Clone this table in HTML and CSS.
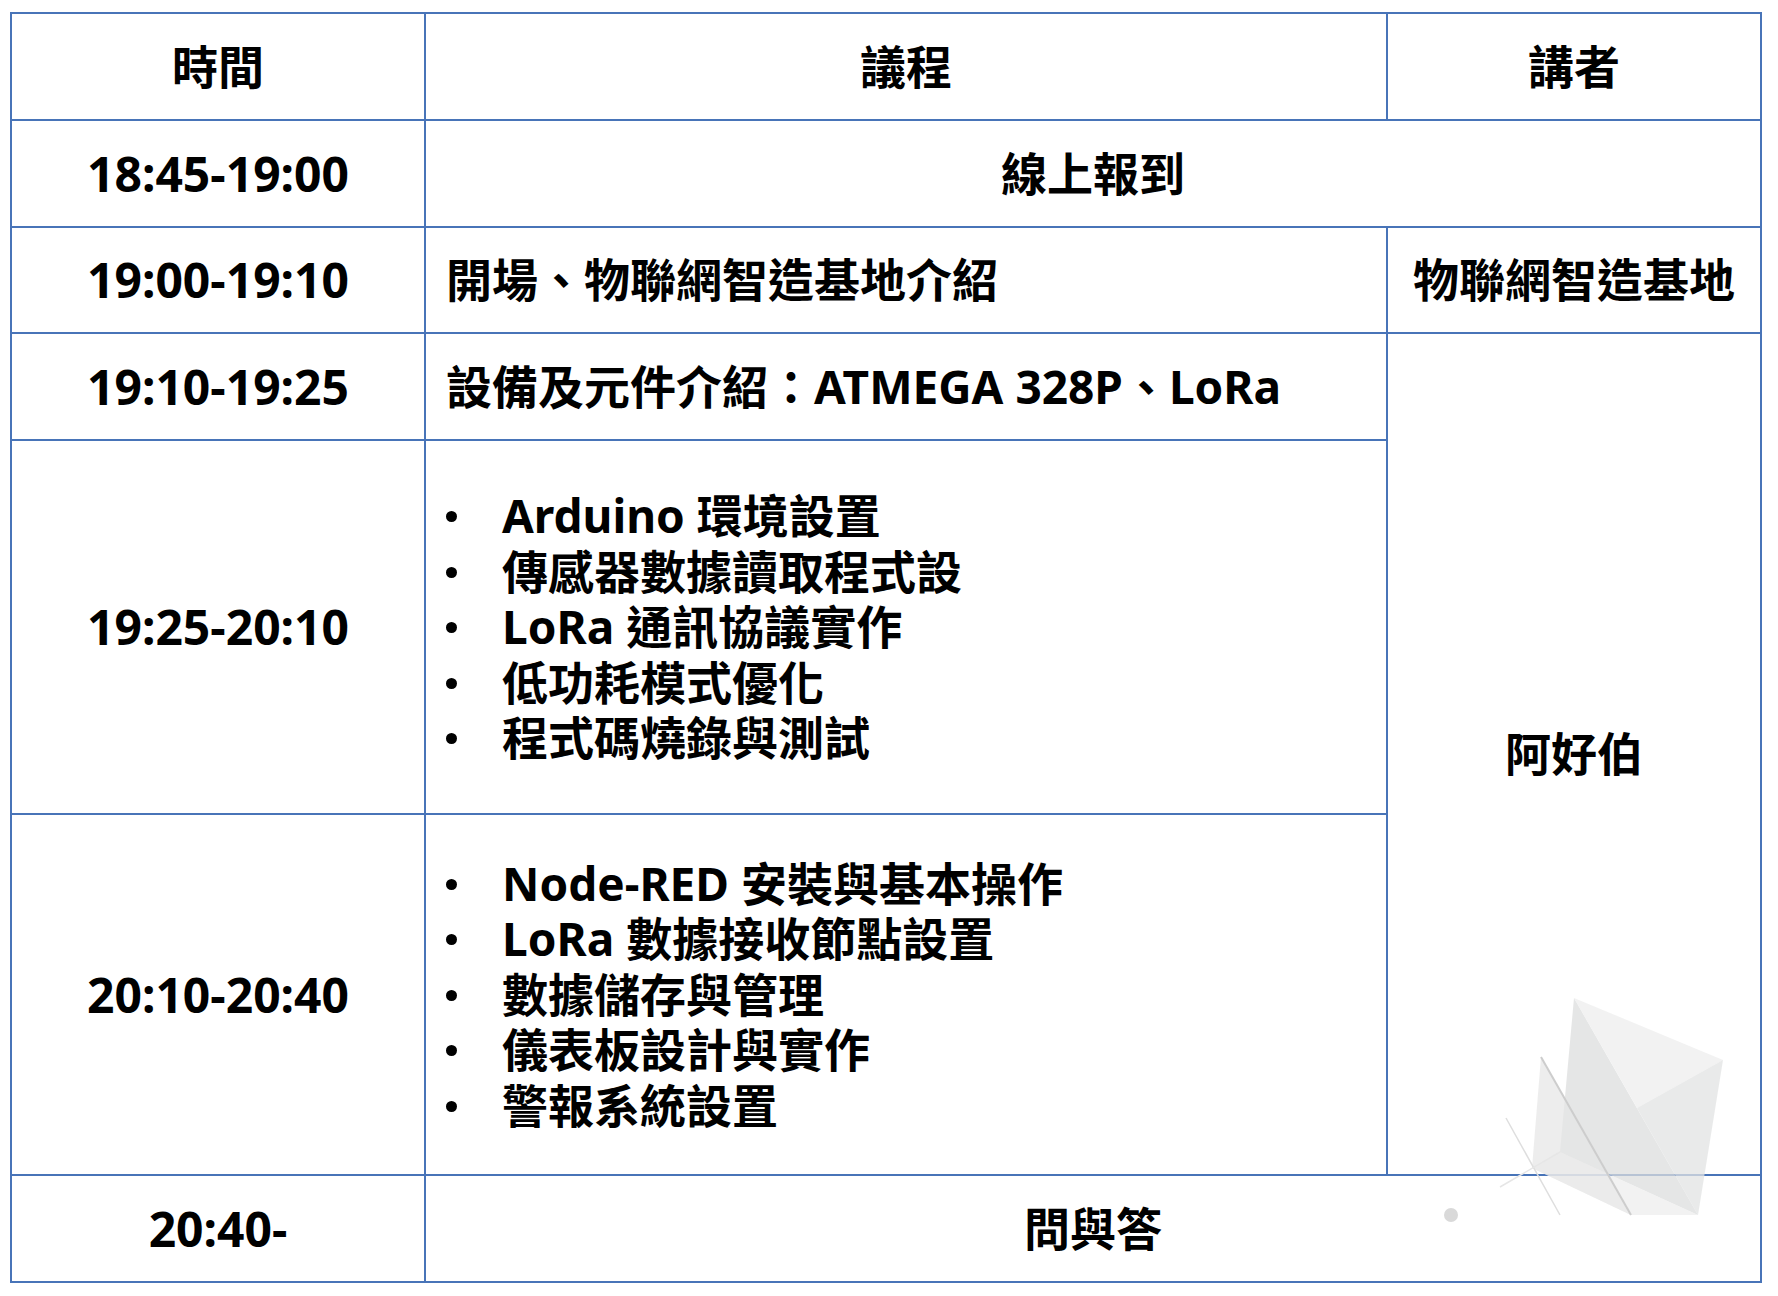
FILE: index.html
```html
<!DOCTYPE html>
<html lang="zh-Hant">
<head>
<meta charset="utf-8">
<title>議程</title>
<link rel="stylesheet" href="styles.css">
</head>
<body>
<div class="page">
  <div class="agenda">
    <div class="cell head">時間</div>
    <div class="cell head">議程</div>
    <div class="cell head">講者</div>

    <div class="cell time">18:45-19:00</div>
    <div class="cell center span2">線上報到</div>

    <div class="cell time">19:00-19:10</div>
    <div class="cell left">開場、物聯網智造基地介紹</div>
    <div class="cell center">物聯網智造基地</div>

    <div class="cell time">19:10-19:25</div>
    <div class="cell left">設備及元件介紹：ATMEGA 328P、LoRa</div>
    <div class="cell center speaker">阿好伯</div>

    <div class="cell time">19:25-20:10</div>
    <div class="cell list">
      <ul class="bullets">
        <li>Arduino 環境設置</li>
        <li>傳感器數據讀取程式設</li>
        <li>LoRa 通訊協議實作</li>
        <li>低功耗模式優化</li>
        <li>程式碼燒錄與測試</li>
      </ul>
    </div>

    <div class="cell time">20:10-20:40</div>
    <div class="cell list">
      <ul class="bullets">
        <li>Node-RED 安裝與基本操作</li>
        <li>LoRa 數據接收節點設置</li>
        <li>數據儲存與管理</li>
        <li>儀表板設計與實作</li>
        <li>警報系統設置</li>
      </ul>
    </div>

    <div class="cell time">20:40-</div>
    <div class="cell center span2">問與答</div>
  </div>

  <svg class="watermark" viewBox="1440 980 300 250" width="300" height="250" aria-hidden="true">
    <polygon points="1574,998 1560,1152 1698,1215" fill="#dcdddd" fill-opacity="0.75"/>
    <polygon points="1574,998 1723,1060 1637,1108" fill="#efefef" fill-opacity="0.8"/>
    <polygon points="1637,1108 1723,1060 1698,1215" fill="#e2e3e3" fill-opacity="0.75"/>
    <polygon points="1541,1057 1532,1168 1631,1215" fill="#e6e6e6" fill-opacity="0.7"/>
    <polygon points="1532,1168 1560,1152 1698,1215 1631,1215" fill="#e9e9e9" fill-opacity="0.6"/>
    <line x1="1541" y1="1057" x2="1631" y2="1215" stroke="#cdcdcd" stroke-width="2"/>
    <line x1="1506" y1="1118" x2="1560" y2="1215" stroke="#dedede" stroke-width="1.5"/>
    <line x1="1500" y1="1187" x2="1560" y2="1152" stroke="#e6e6e6" stroke-width="1.5"/>
    <circle cx="1451" cy="1215" r="7" fill="#d9d9d9"/>
  </svg>
</div>
</body>
</html>
```

FILE: styles.css
```css
html, body {
  margin: 0;
  padding: 0;
  background: #ffffff;
}

.page {
  position: relative;
  width: 1778px;
  height: 1296px;
  padding: 12px 0 0 10px;
  box-sizing: border-box;
  overflow: hidden;
}

.agenda {
  display: grid;
  grid-template-columns: 412px 960px 372px;
  grid-template-rows: 105px 105px 104px 105px 372px 359px 105px;
  gap: 2px;
  padding: 2px;
  width: max-content;
  background: #4874b8;
  font-family: "Noto Sans", "Noto Sans CJK TC", sans-serif;
  font-weight: 700;
  font-size: 46px;
  color: #000000;
}

.cell {
  background: #ffffff;
  display: flex;
  align-items: center;
  box-sizing: border-box;
  line-height: 1.2;
}

.head,
.time,
.center {
  justify-content: center;
}

.time {
  font-size: 48px;
}

.span2 {
  grid-column: 2 / 4;
}

.left {
  padding-left: 20px;
}

.speaker {
  grid-column: 3;
  grid-row: 4 / 7;
}

.list {
  padding-left: 20px;
}

.bullets {
  list-style: none;
  margin: 0;
  padding: 0;
}

.bullets li {
  position: relative;
  padding-left: 56px;
  line-height: 55.5px;
}

.bullets li::before {
  content: "";
  position: absolute;
  left: 0;
  top: 23px;
  width: 11px;
  height: 11px;
  border-radius: 50%;
  background: #000000;
}

.watermark {
  position: absolute;
  left: 1440px;
  top: 980px;
  pointer-events: none;
}
```
